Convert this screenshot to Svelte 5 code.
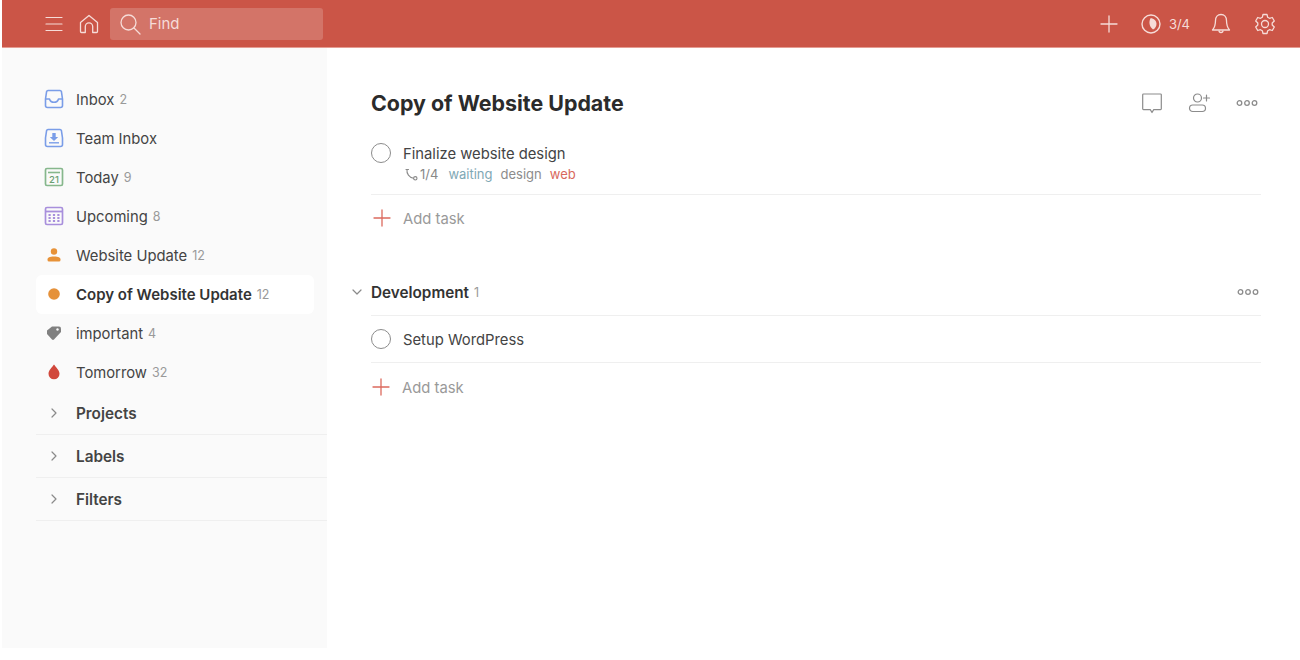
<script>
  const navItems = [
    { name: "Inbox", count: 2, icon: "inbox" },
    { name: "Team Inbox", icon: "team" },
    { name: "Today", count: 9, icon: "today" },
    { name: "Upcoming", count: 8, icon: "upcoming" },
    { name: "Website Update", count: 12, icon: "person" },
    { name: "Copy of Website Update", count: 12, icon: "dot", active: true },
    { name: "important", count: 4, icon: "label" },
    { name: "Tomorrow", count: 32, icon: "drop" }
  ];
  const groups = ["Projects", "Labels", "Filters"];
</script>

<div class="app">
  <header class="topbar">
    <div class="top-left">
      <button class="icon-btn menu" aria-label="Menu">
        <svg width="20" height="20" viewBox="0 0 20 20" fill="none" stroke="currentColor" stroke-width="1.2" stroke-linecap="round"><path d="M2 3.5h16M2 10h16M2 16.5h16" /></svg>
      </button>
      <button class="icon-btn home" aria-label="Home">
        <svg width="22" height="22" viewBox="0 0 22 22" fill="none" stroke="currentColor" stroke-width="1.3" stroke-linejoin="round"><path d="M2.5 9.5 11 2.500l8.500 7v9a1 1 0 0 1-1 1h-3.800v-6a3.700 3.700 0 0 0-7.400 0v6H3.500a1 1 0 0 1-1-1z" /></svg>
      </button>
      <div class="search">
        <svg width="22" height="22" viewBox="0 0 22 22" fill="none" stroke="currentColor" stroke-width="1.3" stroke-linecap="round"><circle cx="9.500" cy="9.500" r="7.500" /><path d="m15 15 6 6" /></svg>
        <span>Find</span>
      </div>
    </div>
    <div class="top-right">
      <svg class="plus" width="18" height="18" viewBox="0 0 18 18" fill="none" stroke="currentColor" stroke-width="1.3" stroke-linecap="round"><path d="M9 1v16M1 9h16" /></svg>
      <div class="karma">
        <svg width="20" height="20" viewBox="0 0 20 20"><circle cx="10" cy="10" r="9" fill="none" stroke="currentColor" stroke-width="1.400" /><path d="M9.500 4.200c3.500 0 6 2.600 6 5.600 0 2.600-1.500 5-3.500 5.800-1.800-1.300-3.300-3.500-3.500-6-.2-2 .2-3.800 1-5.400z" fill="currentColor" /></svg>
        <span>3/4</span>
      </div>
      <svg class="bell" width="20" height="22" viewBox="0 0 20 22" fill="none" stroke="currentColor" stroke-width="1.3" stroke-linejoin="round"><path d="M10 1.500c-3.400 0-5.500 2.600-5.500 6 0 4.500-.8 7-3 9.500h17c-2.200-2.500-3-5-3-9.500 0-3.400-2.100-6-5.500-6z" /><path d="M8 17.500a2 2 0 0 0 4 0" /></svg>
      <svg class="gear" width="22" height="22" viewBox="0 0 22 22" fill="none" stroke="currentColor" stroke-width="1.3" stroke-linejoin="round"><path d="M9 1.500h4l.7 2.800 1.800 1 2.800-.8 2 3.500-2.100 2v2l2.100 2-2 3.500-2.800-.8-1.800 1-.7 2.800H9l-.7-2.800-1.800-1-2.800.8-2-3.500 2.100-2v-2l-2.100-2 2-3.500 2.800.8 1.800-1z" /><circle cx="11" cy="11" r="3.500" /></svg>
    </div>
  </header>

  <div class="body">
    <aside class="sidebar">
      <nav class="nav">
        {#each navItems as item}
          <div class="nav-item" class:active={item.active}>
            <span class="nav-icon">
              {#if item.icon === "inbox"}
                <svg width="20" height="20" viewBox="0 0 20 20" fill="none" stroke="#7a9de8" stroke-width="1.600" stroke-linejoin="round" stroke-linecap="round"><path d="M4 1.500h12c.8 0 1.200.4 1.400 1l1.100 7.500v6.500a2 2 0 0 1-2 2h-13a2 2 0 0 1-2-2V10l1.100-7.500c.2-.6.600-1 1.400-1z" /><path d="M1.800 10h3.700c.6 2 2.500 3.300 4.500 3.300s3.900-1.300 4.500-3.300h3.700" /></svg>
              {:else if item.icon === "team"}
                <svg width="20" height="20" viewBox="0 0 20 20" fill="none" stroke="#7a9de8" stroke-width="1.600" stroke-linejoin="round"><path d="M4 1.500h12c.8 0 1.200.4 1.400 1l1.100 7.500v6.500a2 2 0 0 1-2 2h-13a2 2 0 0 1-2-2V10l1.100-7.500c.2-.6.600-1 1.400-1z" /><path d="M8.300 5h3.400v4h2.500L10 13 5.800 9h2.500z" fill="#7a9de8" stroke="none" /><path d="M5 14.800h10" stroke-width="1.400" /></svg>
              {:else if item.icon === "today"}
                <svg width="20" height="20" viewBox="0 0 20 20" fill="none"><rect x="1.500" y="1.500" width="17" height="17" rx="1.500" stroke="#86b78c" stroke-width="1.700" /><path d="M4 5.500h12" stroke="#86b78c" stroke-width="1.600" /><text x="10" y="15.800" text-anchor="middle" class="cal-num">21</text></svg>
              {:else if item.icon === "upcoming"}
                <svg width="20" height="20" viewBox="0 0 20 20" fill="none"><rect x="1.500" y="1.500" width="17" height="17" rx="1.500" stroke="#a88fdc" stroke-width="1.700" /><path d="M2 5.500h16" stroke="#a88fdc" stroke-width="1.800" /><path d="M4.500 9h2.200M8.900 9h2.200M13.300 9h2.200M4.500 12h2.200M8.900 12h2.200M13.300 12h2.200M4.500 15h2.200M8.900 15h2.200M13.300 15h2.200" stroke="#a88fdc" stroke-width="1.800" /></svg>
              {:else if item.icon === "person"}
                <svg width="16" height="16" viewBox="0 0 16 16" fill="#e79238"><circle cx="8" cy="4.500" r="3.200" /><path d="M1.500 12.500c0-2 2-3 6.500-3s6.500 1 6.500 3v.5a1.500 1.500 0 0 1-1.500 1.500H3A1.500 1.500 0 0 1 1.500 13z" /></svg>
              {:else if item.icon === "dot"}
                <svg width="14" height="14" viewBox="0 0 14 14"><circle cx="7" cy="7" r="5.800" fill="#e5913a" /></svg>
              {:else if item.icon === "label"}
                <svg width="16" height="16" viewBox="0 0 16 16"><path d="M1 9V5.500L6 1.500h7a2 2 0 0 1 2 2V7l-7 7.500a1.500 1.500 0 0 1-2 0z" fill="#808080" /><circle cx="11.500" cy="4.500" r="1.200" fill="#fafafa" /></svg>
              {:else}
                <svg width="14" height="16" viewBox="0 0 14 16"><path d="M7 .5c2 3 5.500 5.700 5.500 9.300A5.500 5.500 0 0 1 1.500 9.800C1.500 6.200 5 3.500 7 .5z" fill="#d1483c" /></svg>
              {/if}
            </span>
            <span class="nav-name">{item.name}</span>
            {#if item.count}<span class="nav-count">{item.count}</span>{/if}
          </div>
        {/each}
      </nav>
      <div class="groups">
        {#each groups as group}
          <div class="group">
            <svg width="10" height="10" viewBox="0 0 10 10" fill="none" stroke="#8a8a8a" stroke-width="1.200" stroke-linecap="round" stroke-linejoin="round"><path d="m3 1 4 4-4 4" /></svg>
            <span>{group}</span>
          </div>
        {/each}
      </div>
    </aside>

    <main class="content">
      <div class="title-row">
        <h1>Copy of Website Update</h1>
        <div class="actions">
          <svg width="22" height="22" viewBox="0 0 22 22" fill="none" stroke="#8c8c8c" stroke-width="1.200" stroke-linejoin="round"><path d="M2.500 2h17a.8.800 0 0 1 .8.800v14a.8.800 0 0 1-.8.800h-6.800L11 20.500 9.300 17.600H2.500a.8.800 0 0 1-.8-.8v-14a.8.800 0 0 1 .8-.8z" /></svg>
          <svg width="24" height="22" viewBox="0 0 24 22" fill="none" stroke="#8c8c8c" stroke-width="1.200" stroke-linecap="round"><circle cx="9.500" cy="6" r="4" /><rect x="1.500" y="13" width="16" height="6.500" rx="3.200" /><path d="M18.500 3v6M15.500 6h6" /></svg>
          <svg class="dots" width="22" height="8" viewBox="0 0 22 8" fill="none" stroke="#8c8c8c" stroke-width="1.300"><circle cx="3.500" cy="4" r="2.300" /><circle cx="11" cy="4" r="2.300" /><circle cx="18.500" cy="4" r="2.300" /></svg>
        </div>
      </div>

      <div class="task first">
        <span class="check"></span>
        <div class="task-body">
          <div class="task-name">Finalize website design</div>
          <div class="task-meta">
            <span class="sub">
              <svg width="13" height="13" viewBox="0 0 13 13" fill="none" stroke="#8a8a8a" stroke-width="1.100"><circle cx="10.300" cy="10.300" r="1.700" /><path d="M2 1.500c-.6 4.200 2.200 8 6.500 8.800" stroke-linecap="round" /><path d="M1 1.500h2.500" stroke-linecap="round" /></svg>
              <span>1/4</span>
            </span>
            <span class="waiting">waiting</span>
            <span class="design">design</span>
            <span class="web">web</span>
          </div>
        </div>
      </div>
      <div class="add-task">
        <svg width="18" height="18" viewBox="0 0 18 18" fill="none" stroke="#dc6a5e" stroke-width="1.300" stroke-linecap="round"><path d="M9 1v16M1 9h16" /></svg>
        <span>Add task</span>
      </div>

      <section class="section">
        <div class="section-head">
          <svg class="caret" width="10" height="10" viewBox="0 0 10 10" fill="none" stroke="#8a8a8a" stroke-width="1.200" stroke-linecap="round" stroke-linejoin="round"><path d="m1 3 4 4 4-4" /></svg>
          <span class="section-name">Development</span>
          <span class="section-count">1</span>
          <svg class="dots section-dots" width="22" height="8" viewBox="0 0 22 8" fill="none" stroke="#8c8c8c" stroke-width="1.300"><circle cx="3.500" cy="4" r="2.300" /><circle cx="11" cy="4" r="2.300" /><circle cx="18.500" cy="4" r="2.300" /></svg>
        </div>
        <div class="task">
          <span class="check"></span>
          <div class="task-body"><div class="task-name">Setup WordPress</div></div>
        </div>
        <div class="add-task">
          <svg width="18" height="18" viewBox="0 0 18 18" fill="none" stroke="#dc6a5e" stroke-width="1.300" stroke-linecap="round"><path d="M9 1v16M1 9h16" /></svg>
          <span>Add task</span>
        </div>
      </section>
    </main>
  </div>
</div>

<style>
  :global(body) {
    margin: 0;
    background: #fff;
  }

  .app {
    margin-left: 2px;
    height: 648px;
    display: flex;
    flex-direction: column;
    font-family: Inter, "Liberation Sans", sans-serif;
    color: #444;
    font-size: 14.800px;
  }

  .topbar {
    height: 47px;
    flex: none;
    background: #cb5547;
    border-bottom: 1px solid #e59c92;
    display: flex;
    align-items: center;
    justify-content: space-between;
    color: #f6dcd8;
  }

  .top-left {
    display: flex;
    align-items: center;
    padding-left: 42px;
  }

  .icon-btn {
    background: none;
    border: 0;
    padding: 0;
    color: inherit;
    display: flex;
  }

  .home {
    margin-left: 14px;
  }

  .search {
    margin-left: 10px;
    width: 213px;
    height: 32px;
    box-sizing: border-box;
    padding-left: 9px;
    background: #d37468;
    border-radius: 3px;
    display: flex;
    align-items: center;
    gap: 8px;
    font-size: 15px;
  }

  .top-right {
    display: flex;
    align-items: center;
    padding-right: 24px;
  }

  .karma {
    display: flex;
    align-items: center;
    gap: 8px;
    margin-left: 23px;
    font-size: 13px;
  }

  .bell {
    margin-left: 21px;
  }

  .gear {
    margin-left: 23px;
  }

  .body {
    flex: 1;
    display: flex;
    min-height: 0;
  }

  .sidebar {
    width: 325px;
    flex: none;
    background: #fafafa;
    padding: 32px 0 0 34px;
    box-sizing: border-box;
  }

  .nav-item {
    height: 39px;
    width: 278px;
    box-sizing: border-box;
    padding-bottom: 2px;
    display: flex;
    align-items: center;
    border-radius: 6px;
  }

  .nav-item.active {
    background: #fff;
  }

  .nav-item.active .nav-name {
    font-size: 15px;
    font-weight: 600;
    color: #333;
  }

  .nav-icon {
    width: 36px;
    flex: none;
    display: flex;
    justify-content: center;
    margin-right: 4px;
  }

  .nav-name,
  .nav-count {
    margin-top: 2px;
  }

  .nav-count {
    margin-left: 5px;
    font-size: 12.500px;
    color: #999;
  }

  .cal-num {
    font-family: Inter, sans-serif;
    font-size: 9.500px;
    font-weight: 500;
    fill: #6a9f72;
  }

  .group {
    height: 43px;
    box-sizing: border-box;
    border-bottom: 1px solid #efefef;
    display: flex;
    align-items: center;
    gap: 17px;
    padding-left: 13px;
    font-size: 15.300px;
    font-weight: 600;
    color: #444;
  }

  .content {
    flex: 1;
    min-width: 0;
    padding: 38px 39px 0 44px;
    box-sizing: border-box;
  }

  .title-row {
    height: 34px;
    display: flex;
    align-items: center;
    justify-content: space-between;
  }

  h1 {
    margin: 0;
    font-size: 21.400px;
    font-weight: 700;
    color: #2b2b2b;
  }

  .actions {
    display: flex;
    align-items: center;
    gap: 25px;
    margin-right: 3px;
  }

  .actions .dots {
    margin-left: -1px;
  }

  .task {
    display: flex;
    gap: 12px;
    align-items: center;
    height: 47px;
    box-sizing: border-box;
    border-bottom: 1px solid #efefef;
  }

  .task.first {
    height: 75px;
    align-items: flex-start;
    padding-top: 23px;
  }

  .check {
    width: 18px;
    height: 18px;
    border: 1.300px solid #8c8c8c;
    border-radius: 50%;
    flex: none;
  }

  .task-name {
    line-height: 20px;
    padding-top: 1px;
  }

  .task-meta {
    display: flex;
    align-items: center;
    gap: 8px;
    font-size: 13px;
    margin-top: 2px;
    margin-left: 2px;
    color: #888;
  }

  .sub {
    display: flex;
    align-items: center;
    gap: 2px;
    margin-right: 2px;
  }

  .waiting {
    color: #7fa8b5;
  }

  .design {
    color: #8c8c8c;
  }

  .web {
    color: #d8685c;
  }

  .add-task {
    height: 46px;
    display: flex;
    align-items: center;
    gap: 12px;
    padding-left: 2px;
    color: #999;
  }

  .add-task span {
    margin-top: 2px;
  }

  .section {
    margin-top: 27px;
  }

  .section .add-task {
    height: 48px;
    padding-left: 1px;
  }

  .section-head {
    position: relative;
    height: 48px;
    box-sizing: border-box;
    display: flex;
    align-items: center;
    gap: 5px;
    border-bottom: 1px solid #efefef;
  }

  .caret {
    position: absolute;
    left: -19px;
    top: 19px;
  }

  .section-name {
    font-size: 15.300px;
    font-weight: 600;
    color: #333;
    margin-top: 2px;
  }

  .section-count {
    font-size: 12.500px;
    color: #999;
    margin-top: 2px;
  }

  .section-dots {
    margin-left: auto;
    margin-right: 2px;
  }
</style>
